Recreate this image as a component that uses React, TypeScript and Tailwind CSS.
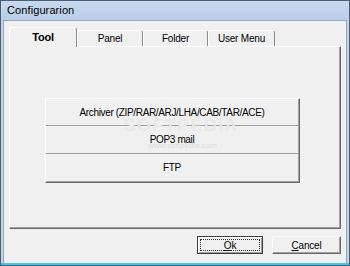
const font = { fontFamily: '"Liberation Sans", Arial, sans-serif' };

const tabs = [
  { label: "Tool", w: "w-[68px]", active: true },
  { label: "Panel", w: "w-[66px]", active: false },
  { label: "Folder", w: "w-[65px]", active: false },
  { label: "User Menu", w: "w-[67px]", active: false },
];

const rows = ["Archiver (ZIP/RAR/ARJ/LHA/CAB/TAR/ACE)", "POP3 mail", "FTP"];

export default function App() {
  return (
    <div
      className="flex flex-col w-[350px] h-[266px] bg-[#bfd3eb] border border-[#4b5e74] text-black"
      style={font}
    >
      {/* title bar */}
      <div className="h-[19px] flex items-center pl-[6px] text-[11px] tracking-[0.1px] bg-gradient-to-b from-[#c8daef] to-[#b8cde7]">
        Configurarion
      </div>

      {/* client area */}
      <div className="flex-1 mx-[2px] flex flex-col bg-[#f0f0f0] border border-b-0 border-[#93a6bd] pl-[5px] pr-[5px] pt-[6px]">
        {/* tab strip */}
        <div className="flex items-end h-[19px] text-[10px] tracking-[-0.2px]">
          {tabs.map((t) =>
            t.active ? (
              <div
                key={t.label}
                className={`${t.w} relative z-10 h-[20px] -mb-px flex items-center justify-center font-bold text-[11px] bg-[#f0f0f0] border-t border-l border-white border-r border-r-[#8a8a8a] rounded-t-[3px]`}
              >
                {t.label}
              </div>
            ) : (
              <div
                key={t.label}
                className={`${t.w} h-[16px] flex items-center justify-center bg-[#f0f0f0] border-t border-l border-white border-r border-r-[#8a8a8a] rounded-t-[3px]`}
              >
                {t.label}
              </div>
            )
          )}
        </div>

        {/* tab panel */}
        <div className="relative h-[183px] border-t border-l border-white border-r border-b border-r-[#696969] border-b-[#696969] shadow-[inset_-1px_-1px_0_#a0a0a0] pt-[51px] pl-[35px]">
          <div className="w-[255px] flex flex-col border-t border-l border-white border-r border-b border-r-[#696969] border-b-[#696969] text-[10px] tracking-[-0.35px]">
            {rows.map((r, i) => (
              <button
                key={r}
                className={`${i === 0 ? "h-[27px]" : "h-[28px]"} flex items-center justify-center bg-[#f0f0f0] border-b border-r border-[#a0a0a0]`}
              >
                {r}
              </button>
            ))}
          </div>

          {/* watermark */}
          <div className="absolute left-[114px] top-[66px] text-[17px] tracking-[2px] text-[#ebebeb] [text-shadow:0_0_1px_#dcdcdc] pointer-events-none">
            SOFTPEDIA
          </div>
          <div className="absolute left-[138px] top-[93px] text-[8px] text-[#dddddd] pointer-events-none">
            www.softpedia.com
          </div>
        </div>

        {/* dialog buttons */}
        <div className="flex justify-end gap-[9px] mt-[7px] text-[10px] tracking-[-0.2px]">
          <button className="w-[66px] h-[18px] flex items-center justify-center bg-[#f0f0f0] border border-[#3c3c3c] shadow-[inset_1px_1px_0_#ffffff,inset_-1px_-1px_0_#a0a0a0] outline-1 outline-dotted outline-offset-[-4px] outline-[#333]">
            <span>
              <span className="underline">O</span>k
            </span>
          </button>
          <button className="w-[69px] h-[18px] flex items-center justify-center bg-[#f0f0f0] border-t border-l border-white border-r border-b border-r-[#696969] border-b-[#696969] shadow-[inset_-1px_-1px_0_#a0a0a0]">
            <span>
              <span className="underline">C</span>ancel
            </span>
          </button>
        </div>
      </div>

      {/* bottom frame strip */}
      <div className="h-[2px] bg-[#3fc4ee]" />
    </div>
  );
}
